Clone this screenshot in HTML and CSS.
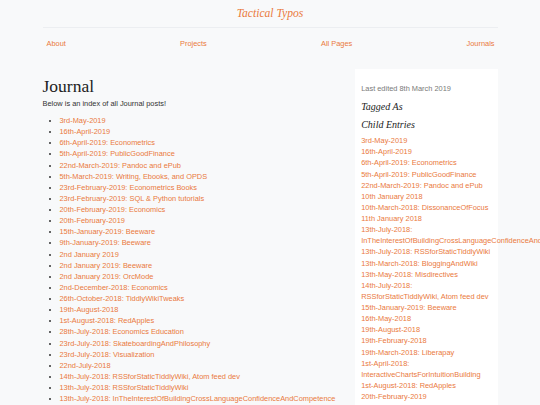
FILE: index.html
```html
<!DOCTYPE html>
<html lang="en">
<head>
<meta charset="utf-8">
<title>Journal - Tactical Typos</title>
<link rel="stylesheet" href="styles.css">
</head>
<body>
<header class="site-header">
  <div class="container">
    <div class="brand"><a href="#">Tactical Typos</a></div>
    <hr class="rule">
    <nav class="nav">
      <a href="#">About</a>
      <a href="#">Projects</a>
      <a href="#">All Pages</a>
      <a href="#">Journals</a>
    </nav>
  </div>
</header>
<div class="container layout">
  <main class="content">
    <h1 class="page-title">Journal</h1>
    <p class="intro">Below is an index of all Journal posts!</p>
    <ul class="posts">
      <li><a href="#">3rd-May-2019</a></li>
      <li><a href="#">16th-April-2019</a></li>
      <li><a href="#">6th-April-2019: Econometrics</a></li>
      <li><a href="#">5th-April-2019: PublicGoodFinance</a></li>
      <li><a href="#">22nd-March-2019: Pandoc and ePub</a></li>
      <li><a href="#">5th-March-2019: Writing, Ebooks, and OPDS</a></li>
      <li><a href="#">23rd-February-2019: Econometrics Books</a></li>
      <li><a href="#">23rd-February-2019: SQL &amp; Python tutorials</a></li>
      <li><a href="#">20th-February-2019: Economics</a></li>
      <li><a href="#">20th-February-2019</a></li>
      <li><a href="#">15th-January-2019: Beeware</a></li>
      <li><a href="#">9th-January-2019: Beeware</a></li>
      <li><a href="#">2nd January 2019</a></li>
      <li><a href="#">2nd January 2019: Beeware</a></li>
      <li><a href="#">2nd January 2019: OrcMode</a></li>
      <li><a href="#">2nd-December-2018: Economics</a></li>
      <li><a href="#">26th-October-2018: TiddlyWikiTweaks</a></li>
      <li><a href="#">19th-August-2018</a></li>
      <li><a href="#">1st-August-2018: RedApples</a></li>
      <li><a href="#">28th-July-2018: Economics Education</a></li>
      <li><a href="#">23rd-July-2018: SkateboardingAndPhilosophy</a></li>
      <li><a href="#">23rd-July-2018: Visualization</a></li>
      <li><a href="#">22nd-July-2018</a></li>
      <li><a href="#">14th-July-2018: RSSforStaticTiddlyWiki, Atom feed dev</a></li>
      <li><a href="#">13th-July-2018: RSSforStaticTiddlyWiki</a></li>
      <li><a href="#">13th-July-2018: InTheInterestOfBuildingCrossLanguageConfidenceAndCompetence</a></li>
    </ul>
  </main>
  <aside class="sidebar">
    <p class="edited">Last edited 8th March 2019</p>
    <h2 class="side-title">Tagged As</h2>
    <h2 class="side-title">Child Entries</h2>
    <ul class="children">
      <li><a href="#">3rd-May-2019</a></li>
      <li><a href="#">16th-April-2019</a></li>
      <li><a href="#">6th-April-2019: Econometrics</a></li>
      <li><a href="#">5th-April-2019: PublicGoodFinance</a></li>
      <li><a href="#">22nd-March-2019: Pandoc and ePub</a></li>
      <li><a href="#">10th January 2018</a></li>
      <li><a href="#">10th-March-2018: DissonanceOfFocus</a></li>
      <li><a href="#">11th January 2018</a></li>
      <li><a href="#">13th-July-2018: InTheInterestOfBuildingCrossLanguageConfidenceAndCompetence</a></li>
      <li><a href="#">13th-July-2018: RSSforStaticTiddlyWiki</a></li>
      <li><a href="#">13th-March-2018: BloggingAndWiki</a></li>
      <li><a href="#">13th-May-2018: Misdirectives</a></li>
      <li><a href="#">14th-July-2018: RSSforStaticTiddlyWiki, Atom feed dev</a></li>
      <li><a href="#">15th-January-2019: Beeware</a></li>
      <li><a href="#">16th-May-2018</a></li>
      <li><a href="#">19th-August-2018</a></li>
      <li><a href="#">19th-February-2018</a></li>
      <li><a href="#">19th-March-2018: Liberapay</a></li>
      <li><a href="#">1st-April-2018: InteractiveChartsForIntuitionBuilding</a></li>
      <li><a href="#">1st-August-2018: RedApples</a></li>
      <li><a href="#">20th-February-2019</a></li>
    </ul>
  </aside>
</div>
</body>
</html>
```
FILE: styles.css
```css
html, body {
  margin: 0;
  padding: 0;
}
body {
  background: #f8f9fa;
  color: #333;
  font-family: "Liberation Sans", Arial, sans-serif;
  font-size: 7.42px;
  line-height: 11.13px;
}
a {
  color: #ea7a40;
  text-decoration: none;
}
.container {
  width: 455px;
  margin: 0 auto;
}
.site-header {
  padding-top: 7px;
}
.brand {
  text-align: center;
  font-family: "Liberation Serif", "Times New Roman", serif;
  font-style: italic;
  font-size: 11.6px;
  line-height: 14px;
}
.rule {
  border: 0;
  border-top: 1px solid #eceef1;
  margin: 6px 0 0;
  height: 0;
}
.nav {
  display: flex;
  justify-content: space-between;
  padding: 0 3px 0 4px;
  margin-top: 10.4px;
}
.layout {
  display: grid;
  grid-template-columns: 1fr 143px;
  column-gap: 12px;
  margin-top: 19.7px;
  align-items: start;
}
.content {
  min-width: 0;
}
.page-title {
  font-family: "Liberation Serif", "Times New Roman", serif;
  font-weight: normal;
  font-size: 17.5px;
  line-height: 20px;
  color: #222;
  margin: 6.7px 0 0;
}
.intro {
  margin: 1.7px 0 0;
}
.posts {
  margin: 6.3px 0 0;
  padding-left: 17px;
}
.sidebar {
  background: #fff;
  padding: 6.7px 6.7px 7px;
  min-height: 340px;
}
.edited {
  color: #7a7a7a;
  margin: 6.7px 0 0;
}
.side-title {
  font-family: "Liberation Serif", "Times New Roman", serif;
  font-style: italic;
  font-weight: normal;
  font-size: 10px;
  line-height: 12px;
  color: #222;
  margin: 6.9px 0 0;
}
.children {
  list-style: none;
  margin: 3.7px 0 0;
  padding: 0;
}
```
